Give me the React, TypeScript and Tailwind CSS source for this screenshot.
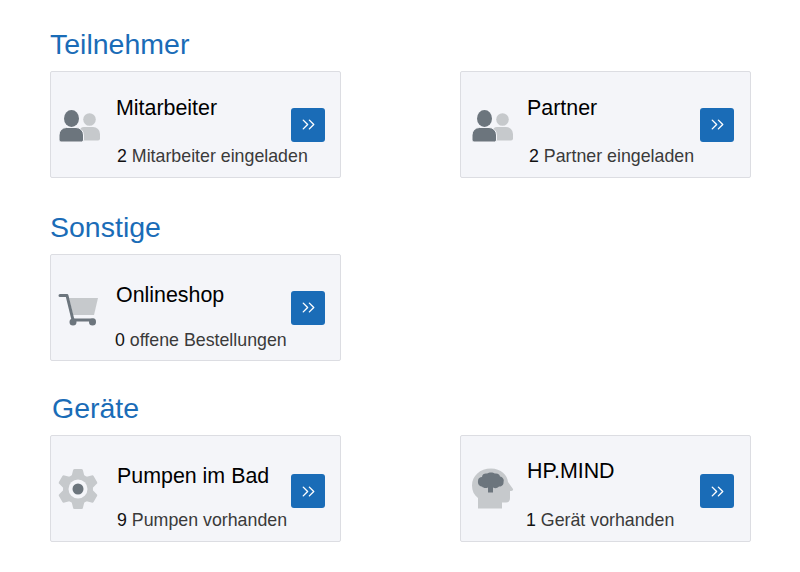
import { ChevronsRight } from "lucide-react"
import type { ReactNode } from "react"

const dark = "#6c757d"
const light = "#c6c9cc"

function PeopleIcon() {
  return (
    <svg width="44" height="44" viewBox="0 0 44 44">
      <circle cx="31.500" cy="16.500" r="6.300" fill={light} />
      <path d="M22 37.500V28a4 4 0 0 1 4-4h9a7 7 0 0 1 7 7v4.500a2 2 0 0 1-2 2z" fill={light} />
      <path d="M1 37v-5a7.500 7.500 0 0 1 7.500-7.500h9.500a7.500 7.500 0 0 1 7.500 7.500v5a2 2 0 0 1-2 2H3a2 2 0 0 1-2-2z" fill={dark} stroke="#f4f5f9" strokeWidth="1" />
      <ellipse cx="13.500" cy="15.500" rx="7.500" ry="8.500" fill={dark} />
    </svg>
  )
}

function CartIcon() {
  return (
    <svg width="44" height="44" viewBox="0 0 44 44">
      <path d="M11 12h29l-4 17H15z" fill={light} />
      <path d="M2 9.500h7l6 24.500h21" fill="none" stroke={dark} strokeWidth="3" strokeLinecap="round" strokeLinejoin="round" />
      <circle cx="15" cy="36" r="3.500" fill={dark} />
      <circle cx="34.500" cy="36" r="3.500" fill={dark} />
    </svg>
  )
}

function GearIcon() {
  return (
    <svg width="44" height="44" viewBox="0 0 44 44">
      <g fill={light}>
        <circle cx="20" cy="22" r="15" />
        {[0, 60, 120, 180, 240, 300].map((a) => (
          <path key={a} d="M15 3.500q0-1.500 1.500-1.500h7q1.500 0 1.500 1.500l1.500 6h-13z" transform={`rotate(${a} 20 22)`} />
        ))}
      </g>
      <circle cx="20" cy="22" r="9.500" fill="#f4f5f9" />
      <circle cx="20" cy="22" r="5.500" fill={dark} />
    </svg>
  )
}

function HeadIcon() {
  return (
    <svg width="44" height="44" viewBox="0 0 44 44">
      <path
        d="M6 41.500V31C2 28 0 24 0 18.500 0 9 8 1.500 19 1.500c10 0 16.500 6.500 17 13.500l5 7c.500 1.500-1 2-3 2v7c0 3-1.500 4.500-4 4.500h-4v6z"
        fill={light}
      />
      <path
        d="M6 14c0-3 2-4 4-4 0-3 3-4 5-3.500 2-1.500 6-1.500 8 0 3-.500 5 1.500 5 3 3 .500 4.500 3.500 3.500 5.500.500 3-2.500 5-4.500 4.500-2 2-4 2-6 1v5h-5v-5c-2 1-5 .500-6-1-2.500 0-4.500-2.500-4-5.500z"
        fill={dark}
      />
    </svg>
  )
}

type CardProps = {
  icon: ReactNode
  iconClass: string
  title: string
  titleClass: string
  count: string
  label: string
  countClass: string
  buttonClass: string
}

function Card({ icon, iconClass, title, titleClass, count, label, countClass, buttonClass }: CardProps) {
  return (
    <div className="flex h-[107px] w-[291px] rounded-[2px] border border-[#dcdde2] bg-[#f4f5f9]">
      <div className={`shrink-0 self-center ${iconClass}`}>{icon}</div>
      <div className="flex min-w-0 flex-1 flex-col">
        <div className={`text-[21.4px] leading-[24px] text-black ${titleClass}`}>{title}</div>
        <div className={`whitespace-nowrap text-[17.8px] leading-[20px] text-[#3a3a3a] ${countClass}`}>
          <span className="text-[#111]">{count}</span> {label}
        </div>
      </div>
      <a className={`flex h-[34px] w-[34px] shrink-0 items-center justify-center self-center rounded-[3px] bg-[#1a6cb7] text-white ${buttonClass}`}>
        <ChevronsRight size={21} strokeWidth={1.6} />
      </a>
    </div>
  )
}

export default function App() {
  return (
    <main className="h-[572px] w-[800px] overflow-hidden bg-white pl-[50px] pt-[27px] font-['Liberation_Sans',Arial,sans-serif]">
      <h2 className="mb-[10px] text-[28.5px] leading-[34px] text-[#1a6cb7]">Teilnehmer</h2>
      <div className="grid grid-cols-[291px_291px] gap-x-[119px]">
        <Card
          icon={<PeopleIcon />}
          iconClass="ml-[7px] mr-[14px]"
          title="Mitarbeiter"
          titleClass="mt-[24px] mb-[26px]"
          count="2"
          label="Mitarbeiter eingeladen"
          countClass="ml-[1px]"
          buttonClass="mr-[15px]"
        />
        <Card
          icon={<PeopleIcon />}
          iconClass="ml-[10px] mr-[12px]"
          title="Partner"
          titleClass="mt-[24px] mb-[26px]"
          count="2"
          label="Partner eingeladen"
          countClass="ml-[2px]"
          buttonClass="mr-[16px]"
        />
      </div>

      <h2 className="mb-[10px] mt-[32px] text-[28.5px] leading-[34px] text-[#1a6cb7]">Sonstige</h2>
      <div className="grid grid-cols-[291px_291px] gap-x-[119px]">
        <Card
          icon={<CartIcon />}
          iconClass="ml-[7px] mr-[14px]"
          title="Onlineshop"
          titleClass="mt-[28px] mb-[23px]"
          count="0"
          label="offene Bestellungen"
          countClass="-ml-[1px]"
          buttonClass="mr-[15px]"
        />
      </div>

      <h2 className="mb-[10px] ml-[2px] mt-[30px] text-[28.5px] leading-[34px] text-[#1a6cb7]">Geräte</h2>
      <div className="grid grid-cols-[291px_291px] gap-x-[119px]">
        <Card
          icon={<GearIcon />}
          iconClass="ml-[7px] mr-[15px]"
          title="Pumpen im Bad"
          titleClass="mt-[28px] mb-[22px]"
          count="9"
          label="Pumpen vorhanden"
          countClass="ml-[0px]"
          buttonClass="mr-[15px] mt-[5px]"
        />
        <Card
          icon={<HeadIcon />}
          iconClass="ml-[11px] mr-[11px]"
          title="HP.MIND"
          titleClass="mt-[23px] mb-[27px]"
          count="1"
          label="Gerät vorhanden"
          countClass="-ml-[1px]"
          buttonClass="mr-[16px] mt-[5px]"
        />
      </div>
    </main>
  )
}
